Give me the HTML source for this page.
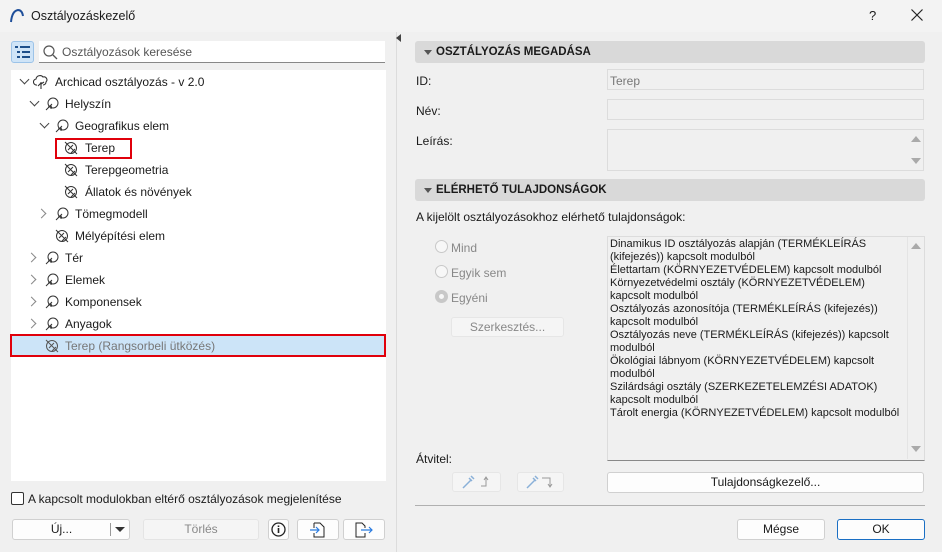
<!DOCTYPE html>
<html><head><meta charset="utf-8"><style>
*{box-sizing:border-box;margin:0;padding:0}
body{width:942px;height:552px;background:#f0f0f0;font-family:"Liberation Sans",sans-serif;font-size:12px;color:#1a1a1a;position:relative;overflow:hidden}
.a{position:absolute;white-space:nowrap}
.btn{position:absolute;background:#fdfdfd;border:1px solid #d0d0d0;border-radius:3px;text-align:center;font-size:12px}
.hdr{position:absolute;left:415px;width:510px;height:22px;background:#d9d9d9;border-radius:3px;font-weight:bold;font-size:11.5px;line-height:22px;padding-left:21px}
.hdr:before{content:"";position:absolute;left:9px;top:9px;border:4px solid transparent;border-top:5px solid #555;border-bottom:0}
.fld{position:absolute;left:607px;width:317px;border:1px solid #dcdcdc;background:#f0f0f0}
.row{position:absolute;left:0;height:22px;line-height:22px;font-size:12px}
.ic{position:absolute;top:4px;width:14px;height:14px}
.chev{position:absolute;top:7px;width:7px;height:7px;border-right:1.5px solid #444;border-bottom:1.5px solid #444}
.dn{transform:rotate(45deg);top:5px}
.rt{transform:rotate(-45deg);border-color:#888}
.radio{position:absolute;width:13px;height:13px;border:1px solid #c8c8c8;border-radius:50%;background:#f7f7f7}
</style></head><body>
<div class="a" style="left:0;top:0;width:942px;height:32px;background:#f3f3f3"></div>
<svg class="a" style="left:9px;top:8px" width="16" height="16"><path d="M2 14 Q3 3 9 2 Q13 2 14 8" fill="none" stroke="#1f4f9a" stroke-width="2"/></svg>
<div class="a" style="left:31px;top:9px;font-size:12.5px">Osztályozáskezelő</div>
<div class="a" style="left:869px;top:8px;font-size:13px">?</div>
<svg class="a" style="left:911px;top:9px" width="12" height="12"><path d="M0.5 0.5l11 11M11.5 0.5l-11 11" stroke="#222" stroke-width="1.2"/></svg>
<div class="a" style="left:0;top:32px;width:397px;height:520px;background:#f0f0f0;border-right:1px solid #dcdcdc"></div>
<div class="a" style="left:396px;top:34px;border:4px solid transparent;border-right:5px solid #444;border-left:0"></div>
<div class="a" style="left:11px;top:41px;width:23px;height:22px;background:#cfe4f7;border:1px solid #9cc3e8;border-radius:3px"></div>
<svg class="a" style="left:15px;top:46px" width="15" height="12"><g stroke="#1d4f8a" stroke-width="2"><path d="M0 1h3M5 1h10M2 6h3M7 6h8M2 11h3M7 11h8"/></g></svg>
<div class="a" style="left:39px;top:41px;width:346px;height:22px;background:#fff;border-bottom:1px solid #888"></div>
<svg class="a" style="left:43px;top:45px" width="15" height="15"><circle cx="6" cy="6" r="5" fill="none" stroke="#555" stroke-width="1.2"/><path d="M10 10l4 4" stroke="#555" stroke-width="1.3"/></svg>
<div class="a" style="left:62px;top:45px;color:#555">Osztályozások keresése</div>
<div class="a" style="left:11px;top:70px;width:375px;height:411px;background:#fff"></div>

<div class="row" style="top:71px"><div class="chev dn" style="left:21px"></div>
<svg class="ic" style="left:33px;width:16px;height:16px;top:3px"><path d="M8 15V8M5 12l3-3M8 10l3-2M4 11a3 3 0 0 1-1-6a4 4 0 0 1 7-2a3 3 0 0 1 3 5a3 3 0 0 1-3 3" fill="none" stroke="#333" stroke-width="1.1"/></svg>
<span class="a" style="left:55px">Archicad osztályozás - v 2.0</span></div>

<div class="row" style="top:93px"><div class="chev dn" style="left:31px"></div><svg class="ic" style="left:45px"><circle cx="8" cy="6" r="5" fill="none" stroke="#333"/><path d="M1 13l6-6M3 10h4M6 8v4" stroke="#333" fill="none"/></svg><span class="a" style="left:65px">Helyszín</span></div>
<div class="row" style="top:115px"><div class="chev dn" style="left:41px"></div><svg class="ic" style="left:55px"><circle cx="8" cy="6" r="5" fill="none" stroke="#333"/><path d="M1 13l6-6M3 10h4M6 8v4" stroke="#333" fill="none"/></svg><span class="a" style="left:75px">Geografikus elem</span></div>
<div class="a" style="left:55px;top:138px;width:77px;height:21px;border:2px solid #e0000b"></div>
<div class="row" style="top:137px"><svg class="ic" style="left:64px"><circle cx="7" cy="7" r="5.5" fill="none" stroke="#333"/><path d="M1 1l12 12M4 9l5-5M7 12l4-4" stroke="#333"/></svg><span class="a" style="left:85px">Terep</span></div>
<div class="row" style="top:159px"><svg class="ic" style="left:64px"><circle cx="7" cy="7" r="5.5" fill="none" stroke="#333"/><path d="M1 1l12 12M4 9l5-5M7 12l4-4" stroke="#333"/></svg><span class="a" style="left:85px">Terepgeometria</span></div>
<div class="row" style="top:181px"><svg class="ic" style="left:64px"><circle cx="7" cy="7" r="5.5" fill="none" stroke="#333"/><path d="M1 1l12 12M4 9l5-5M7 12l4-4" stroke="#333"/></svg><span class="a" style="left:85px">Állatok és növények</span></div>
<div class="row" style="top:203px"><div class="chev rt" style="left:38px"></div><svg class="ic" style="left:55px"><circle cx="8" cy="6" r="5" fill="none" stroke="#333"/><path d="M1 13l6-6M3 10h4M6 8v4" stroke="#333" fill="none"/></svg><span class="a" style="left:75px">Tömegmodell</span></div>
<div class="row" style="top:225px"><svg class="ic" style="left:55px"><circle cx="7" cy="7" r="5.5" fill="none" stroke="#333"/><path d="M1 1l12 12M4 9l5-5M7 12l4-4" stroke="#333"/></svg><span class="a" style="left:75px">Mélyépítési elem</span></div>
<div class="row" style="top:247px"><div class="chev rt" style="left:28px"></div><svg class="ic" style="left:45px"><circle cx="8" cy="6" r="5" fill="none" stroke="#333"/><path d="M1 13l6-6M3 10h4M6 8v4" stroke="#333" fill="none"/></svg><span class="a" style="left:65px">Tér</span></div>
<div class="row" style="top:269px"><div class="chev rt" style="left:28px"></div><svg class="ic" style="left:45px"><circle cx="8" cy="6" r="5" fill="none" stroke="#333"/><path d="M1 13l6-6M3 10h4M6 8v4" stroke="#333" fill="none"/></svg><span class="a" style="left:65px">Elemek</span></div>
<div class="row" style="top:291px"><div class="chev rt" style="left:28px"></div><svg class="ic" style="left:45px"><circle cx="8" cy="6" r="5" fill="none" stroke="#333"/><path d="M1 13l6-6M3 10h4M6 8v4" stroke="#333" fill="none"/></svg><span class="a" style="left:65px">Komponensek</span></div>
<div class="row" style="top:313px"><div class="chev rt" style="left:28px"></div><svg class="ic" style="left:45px"><circle cx="8" cy="6" r="5" fill="none" stroke="#333"/><path d="M1 13l6-6M3 10h4M6 8v4" stroke="#333" fill="none"/></svg><span class="a" style="left:65px">Anyagok</span></div>
<div class="a" style="left:10px;top:334px;width:376px;height:23px;background:#cce4f8;border:2px solid #e0000b"></div>
<div class="row" style="top:335px"><svg class="ic" style="left:45px"><circle cx="7" cy="7" r="5.5" fill="none" stroke="#555"/><path d="M1 1l12 12M4 9l5-5M7 12l4-4" stroke="#555"/></svg><span class="a" style="left:65px;color:#777">Terep (Rangsorbeli ütközés)</span></div>

<div class="a" style="left:11px;top:492px;width:13px;height:13px;border:1px solid #333;border-radius:2px;background:#fff"></div>
<div class="a" style="left:28px;top:492px">A kapcsolt modulokban eltérő osztályozások megjelenítése</div>
<div class="btn" style="left:12px;top:519px;width:118px;height:21px;line-height:19px"><span style="position:absolute;left:0;width:97px">Új...</span><span style="position:absolute;left:97px;top:3px;height:13px;border-left:1px solid #999"></span><span style="position:absolute;left:102px;top:7px;border:5px solid transparent;border-top:5px solid #333;border-bottom:0"></span></div>
<div class="btn" style="left:143px;top:519px;width:116px;height:21px;line-height:19px;background:#f5f5f5;border-color:#e4e4e4;color:#888">Törlés</div>
<div class="btn" style="left:268px;top:519px;width:21px;height:21px"><svg style="margin-top:2px" width="15" height="15"><circle cx="7.5" cy="7.5" r="6.5" fill="none" stroke="#222" stroke-width="1.3"/><path d="M7.5 6v5M7.5 3.5v1.5" stroke="#222" stroke-width="1.6"/></svg></div>
<div class="btn" style="left:297px;top:519px;width:42px;height:21px"><svg style="margin-top:2px" width="16" height="16"><path d="M4 1h6l4 4v10H4v-4M4 6V1" fill="none" stroke="#222"/><path d="M0 8h9M6 5l3 3-3 3" fill="none" stroke="#2a7be0" stroke-width="1.2"/></svg></div>
<div class="btn" style="left:343px;top:519px;width:42px;height:21px"><svg style="margin-top:2px" width="18" height="16"><path d="M10 11v4H1V1h6l3 3v2" fill="none" stroke="#222"/><path d="M6 8h11M14 5l3 3-3 3" fill="none" stroke="#2a7be0" stroke-width="1.2"/></svg></div>

<div class="hdr" style="top:41px">OSZTÁLYOZÁS MEGADÁSA</div>
<div class="a" style="left:416px;top:74px">ID:</div>
<div class="fld" style="top:69px;height:21px;color:#777;padding:4px 2px">Terep</div>
<div class="a" style="left:416px;top:104px">Név:</div>
<div class="fld" style="top:99px;height:21px"></div>
<div class="a" style="left:416px;top:134px">Leírás:</div>
<div class="fld" style="top:129px;height:42px"></div>
<div class="a" style="left:911px;top:136px;border:5px solid transparent;border-bottom:6px solid #aaa;border-top:0"></div>
<div class="a" style="left:911px;top:158px;border:5px solid transparent;border-top:6px solid #aaa;border-bottom:0"></div>
<div class="hdr" style="top:179px">ELÉRHETŐ TULAJDONSÁGOK</div>
<div class="a" style="left:416px;top:210px">A kijelölt osztályozásokhoz elérhető tulajdonságok:</div>
<div class="radio" style="left:435px;top:240px"></div><div class="a" style="left:451px;top:241px;color:#888">Mind</div>
<div class="radio" style="left:435px;top:265px"></div><div class="a" style="left:451px;top:266px;color:#888">Egyik sem</div>
<div class="radio" style="left:435px;top:290px;border:4px solid #c8c8c8;background:#f7f7f7"></div><div class="a" style="left:451px;top:291px;color:#888">Egyéni</div>
<div class="btn" style="left:451px;top:317px;width:113px;height:20px;line-height:18px;background:#f5f5f5;border-color:#e6e6e6;color:#888">Szerkesztés...</div>
<div class="a" style="left:607px;top:236px;width:318px;height:225px;background:#f0f0f0;border:1px solid #dcdcdc;border-bottom:1px solid #888"></div>
<div class="a" style="left:907px;top:237px;width:17px;height:222px;background:#f0f0f0;border-left:1px solid #e4e4e4"></div>
<div class="a" style="left:911px;top:243px;border:5px solid transparent;border-bottom:6px solid #aaa;border-top:0"></div>
<div class="a" style="left:911px;top:446px;border:5px solid transparent;border-top:6px solid #aaa;border-bottom:0"></div>
<div class="a" style="left:610px;top:238px;line-height:13px;font-size:11px;white-space:normal;width:297px">Dinamikus ID osztályozás alapján (TERMÉKLEÍRÁS (kifejezés)) kapcsolt modulból<br>Élettartam (KÖRNYEZETVÉDELEM) kapcsolt modulból<br>Környezetvédelmi osztály (KÖRNYEZETVÉDELEM) kapcsolt modulból<br>Osztályozás azonosítója (TERMÉKLEÍRÁS (kifejezés)) kapcsolt modulból<br>Osztályozás neve (TERMÉKLEÍRÁS (kifejezés)) kapcsolt modulból<br>Ökológiai lábnyom (KÖRNYEZETVÉDELEM) kapcsolt modulból<br>Szilárdsági osztály (SZERKEZETELEMZÉSI ADATOK) kapcsolt modulból<br><span style="white-space:nowrap">Tárolt energia (KÖRNYEZETVÉDELEM) kapcsolt modulból</span></div>
<div class="a" style="left:416px;top:452px">Átvitel:</div>
<div class="btn" style="left:452px;top:472px;width:49px;height:20px;background:#f5f5f5;border-color:#e6e6e6"><svg width="36" height="18"><path d="M4 15l8-8M10 5l3 3M12 3l3 3" stroke="#8ab0d8" stroke-width="1.5" fill="none"/><path d="M22 13h5v-8M25 7l2-3 2 3" stroke="#999" fill="none"/></svg></div>
<div class="btn" style="left:517px;top:472px;width:47px;height:20px;background:#f5f5f5;border-color:#e6e6e6"><svg width="36" height="18"><path d="M4 15l8-8M10 5l3 3M12 3l3 3" stroke="#8ab0d8" stroke-width="1.5" fill="none"/><path d="M19 5h8v8M25 11l2 3 2-3" stroke="#999" fill="none"/></svg></div>
<div class="btn" style="left:607px;top:472px;width:317px;height:21px;line-height:19px">Tulajdonságkezelő...</div>
<div class="a" style="left:415px;top:505px;width:510px;height:1px;background:#b0b0b0"></div>
<div class="btn" style="left:737px;top:519px;width:88px;height:21px;line-height:19px">Mégse</div>
<div class="btn" style="left:837px;top:519px;width:88px;height:21px;line-height:19px;border-color:#1a6fc4">OK</div>
</body></html>
